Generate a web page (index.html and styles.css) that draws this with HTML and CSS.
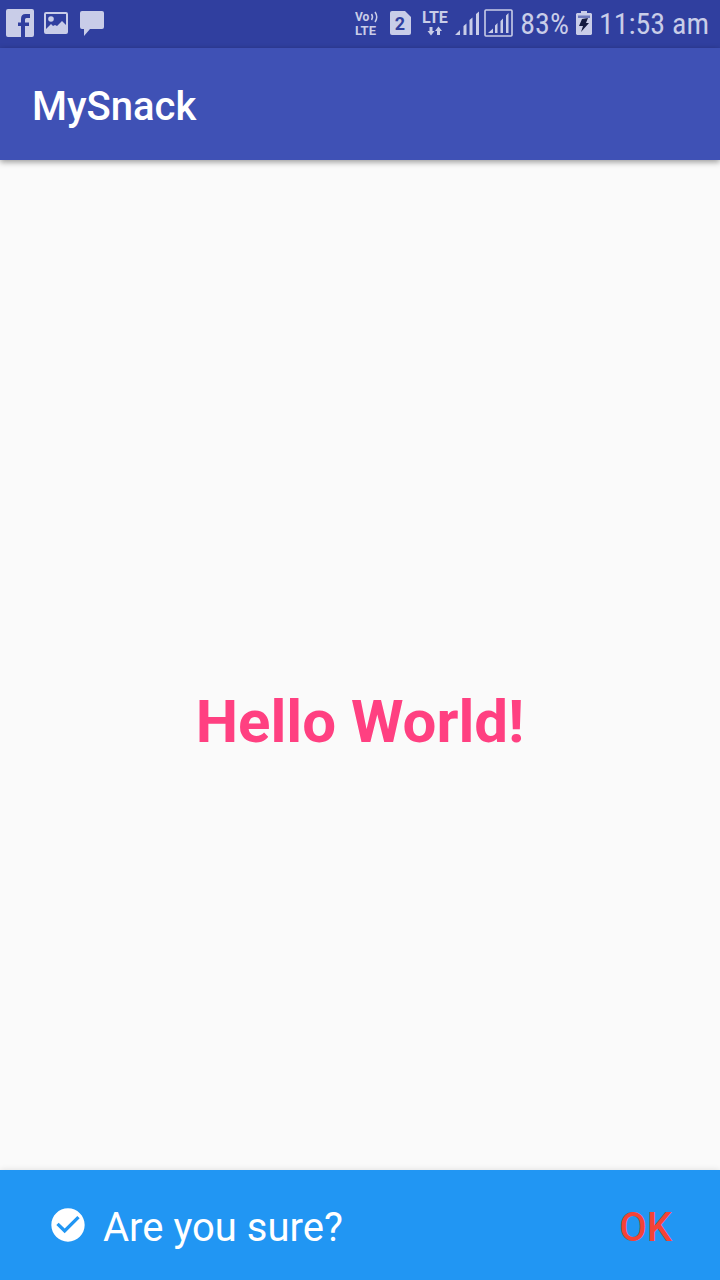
FILE: index.html
```html
<!DOCTYPE html>
<html lang="en">
<head>
<meta charset="utf-8">
<meta name="viewport" content="width=device-width, initial-scale=1">
<title>MySnack</title>
<link rel="stylesheet" href="styles.css">
</head>
<body>
<div class="screen">
  <div class="status-bar">
    <div class="notifications">
      <svg width="28" height="28" viewBox="0 0 28 28" aria-label="Facebook"><path fill="currentColor" d="M2 0H26Q28 0 28 2V26Q28 28 26 28H19V17H23V13.500H19V10.500Q19 9 20.500 9H24V5H19.500Q15 5 15 10V13.500H12V17H15V28H2Q0 28 0 26V2Q0 0 2 0Z"/></svg>
      <svg width="24" height="28" viewBox="0 0 24 28" aria-label="Picture"><path fill="currentColor" fill-rule="evenodd" d="M2 3H22Q24 3 24 5V23Q24 25 22 25H2Q0 25 0 23V5Q0 3 2 3ZM2 5V20L7 15L9 17L11 16L13 17L18 12L22 16V5Z"/><circle cx="7" cy="10" r="2.800" fill="currentColor"/></svg>
      <svg class="message-icon" width="24" height="28" viewBox="0 0 24 28" aria-label="Message"><path fill="currentColor" d="M2 2H22Q24 2 24 4V18Q24 20 22 20H10L4 27V20H2Q0 20 0 18V4Q0 2 2 2Z"/></svg>
    </div>
    <div class="system">
      <div class="network">
        <svg class="badge" width="25" height="28" viewBox="0 0 25 28" aria-label="VoLTE"><text x="0" y="12" font-size="12">Vo</text><text x="0" y="26" font-size="13">LTE</text><path fill="none" stroke="currentColor" stroke-width="1.500" d="M16.500 5Q18.500 8 16.500 11M20 3Q23.500 8 20 13"/></svg>
        <svg class="badge" width="22" height="28" viewBox="0 0 22 28" aria-label="SIM 2"><path fill="currentColor" d="M2 2H15L21 8V24Q21 26 19 26H2Q0 26 0 24V4Q0 2 2 2Z"/><text class="sim-number" x="10" y="21" font-size="18" text-anchor="middle">2</text></svg>
        <svg class="badge" width="26" height="28" viewBox="0 0 26 28" aria-label="LTE data"><text x="0" y="14" font-size="16">LTE</text><path fill="currentColor" d="M7.500 18H10.500V22H12.500L9 26.500L5.500 22H7.500ZM15 26H18V22H20L16.500 17.500L13 22H15Z"/></svg>
      </div>
      <div class="signals">
        <svg width="25" height="28" viewBox="0 0 25 28" aria-label="Signal, SIM 1"><path fill="currentColor" d="M0 26L5 21V26ZM8.500 17L11.500 14.500V26H8.500ZM14.500 11L17.500 8.500V26H14.500ZM21 5L24 2.500V26H21Z"/></svg>
        <svg width="29" height="28" viewBox="0 0 29 28" aria-label="Signal, SIM 2"><rect x="1" y="1" width="27" height="26" rx="1" fill="none" stroke="currentColor" stroke-width="1.600"/><path fill="currentColor" d="M4 24L9 19.500V24ZM11 16.500L13.500 14V24H11ZM16.500 12L19 9.500V24H16.500ZM22 6.500L24.500 4V24H22Z"/></svg>
      </div>
      <span>83%</span>
      <svg width="16" height="28" viewBox="0 0 16 28" aria-label="Charging"><path fill="currentColor" d="M5 2H11V4H15L16 5V25L15 26H1L0 25V5L1 4H5Z"/><path fill="#303f9f" opacity=".6" d="M2 6.500H14V9H2Z"/><path class="bolt" d="M6 10L12 9L10 14H13L5 23L7 17H3Z"/></svg>
      <time class="clock">11:53 am</time>
    </div>
  </div>
  <header class="app-bar"><h1>MySnack</h1></header>
  <main class="content"><p>Hello World!</p></main>
  <div class="snackbar" role="status">
    <svg width="40" height="40" viewBox="0 0 24 24" aria-hidden="true"><path fill="currentColor" d="M12 2C6.480 2 2 6.480 2 12s4.480 10 10 10 10-4.480 10-10S17.520 2 12 2zm-2 15l-5-5 1.410-1.410L10 14.170l7.590-7.590L19 8l-9 9z"/></svg>
    <span class="message">Are you sure?</span>
    <button class="action" type="button">OK</button>
  </div>
</div>
</body>
</html>
```
FILE: styles.css
```css
* {
  box-sizing: border-box;
}

body {
  margin: 0;
  font-family: Roboto, "Noto Sans", sans-serif;
  background: #fafafa;
}

svg {
  display: block;
  flex: none;
}

.screen {
  display: flex;
  flex-direction: column;
  min-height: 100vh;
}

.status-bar {
  display: flex;
  align-items: center;
  justify-content: space-between;
  height: 48px;
  padding: 0 11px 2px 6px;
  color: #c9cde8;
  background: #303f9f;
  font-family: "Roboto Condensed", Roboto, sans-serif;
  font-size: 30px;
  line-height: 44px;
  white-space: nowrap;
}

.status-bar span,
.status-bar time {
  padding-top: 2px;
}

.notifications {
  display: flex;
  align-items: center;
  gap: 10px;
}

.message-icon {
  margin-left: 2px;
}

.system {
  display: flex;
  align-items: center;
  gap: 7px;
}

.network {
  display: flex;
  gap: 10px;
}

.signals {
  display: flex;
  gap: 4px;
}

.badge {
  fill: currentColor;
  font-family: Roboto, sans-serif;
  font-weight: 700;
}

.sim-number {
  fill: #303f9f;
}

.bolt {
  fill: #151b40;
}

.app-bar {
  display: flex;
  align-items: center;
  height: 112px;
  padding: 6px 32px 0;
  color: #fff;
  background: #3f51b5;
  box-shadow: 0 2px 6px rgba(0, 0, 0, 0.4);
}

.app-bar h1 {
  margin: 0;
  font-size: 40px;
  font-weight: 500;
  line-height: 48px;
}

.content {
  display: flex;
  flex: 1;
  align-items: center;
  justify-content: center;
  padding-top: 114px;
}

.content p {
  margin: 0;
  color: #ff4081;
  font-size: 60px;
  font-weight: 700;
  line-height: 72px;
}

.snackbar {
  display: flex;
  align-items: center;
  height: 110px;
  padding: 0 48px;
  color: #fff;
  background: #2196f3;
  box-shadow: 0 0 6px rgba(0, 0, 0, 0.12);
  font-size: 40px;
  line-height: 48px;
}

.message {
  flex: 1;
  padding: 6px 0 0 15px;
}

.action {
  padding: 6px 0 0;
  border: 0;
  color: #f44336;
  background: none;
  font: inherit;
  font-weight: 500;
  cursor: pointer;
}
```
